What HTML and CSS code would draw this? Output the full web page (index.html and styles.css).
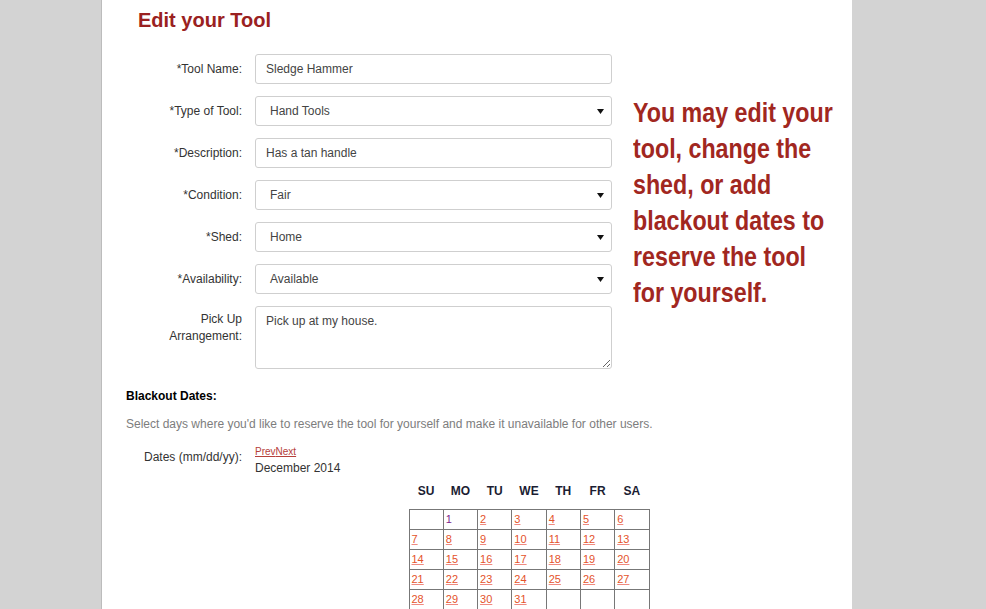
FILE: index.html
```
<!DOCTYPE html>
<html lang="en">
<head>
<meta charset="utf-8">
<title>Edit your Tool</title>
<link rel="stylesheet" href="styles.css">
</head>
<body>
<div class="page">
  <h1 class="title">Edit your Tool</h1>
  <div class="top">
    <form class="form">
      <label class="label">*Tool Name:</label>
      <input class="field" type="text" value="Sledge Hammer">

      <label class="label">*Type of Tool:</label>
      <div class="field select"><span>Hand Tools</span><svg class="caret" width="7" height="5" viewBox="0 0 7 5"><path d="M0 0H7L3.5 5Z" fill="#111"/></svg></div>

      <label class="label">*Description:</label>
      <input class="field" type="text" value="Has a tan handle">

      <label class="label">*Condition:</label>
      <div class="field select"><span>Fair</span><svg class="caret" width="7" height="5" viewBox="0 0 7 5"><path d="M0 0H7L3.5 5Z" fill="#111"/></svg></div>

      <label class="label">*Shed:</label>
      <div class="field select"><span>Home</span><svg class="caret" width="7" height="5" viewBox="0 0 7 5"><path d="M0 0H7L3.5 5Z" fill="#111"/></svg></div>

      <label class="label">*Availability:</label>
      <div class="field select"><span>Available</span><svg class="caret" width="7" height="5" viewBox="0 0 7 5"><path d="M0 0H7L3.5 5Z" fill="#111"/></svg></div>

      <label class="label label-top">Pick Up<br>Arrangement:</label>
      <textarea class="field area">Pick up at my house.</textarea>
    </form>
    <p class="aside">You may edit your<br>tool, change the<br>shed, or add<br>blackout dates to<br>reserve the tool<br>for yourself.</p>
  </div>

  <h2 class="section-title">Blackout Dates:</h2>
  <p class="hint">Select days where you'd like to reserve the tool for yourself and make it unavailable for other users.</p>

  <div class="dates">
    <div class="label dates-label">Dates (mm/dd/yy):</div>
    <div class="dates-body">
      <div class="nav"><a href="#">Prev</a><a href="#">Next</a></div>
      <div class="month">December 2014</div>
      <table class="cal">
        <thead>
          <tr><th>SU</th><th>MO</th><th>TU</th><th>WE</th><th>TH</th><th>FR</th><th>SA</th></tr>
        </thead>
        <tbody>
          <tr><td></td><td><span class="visited">1</span></td><td><a href="#">2</a></td><td><a href="#">3</a></td><td><a href="#">4</a></td><td><a href="#">5</a></td><td><a href="#">6</a></td></tr>
          <tr><td><a href="#">7</a></td><td><a href="#">8</a></td><td><a href="#">9</a></td><td><a href="#">10</a></td><td><a href="#">11</a></td><td><a href="#">12</a></td><td><a href="#">13</a></td></tr>
          <tr><td><a href="#">14</a></td><td><a href="#">15</a></td><td><a href="#">16</a></td><td><a href="#">17</a></td><td><a href="#">18</a></td><td><a href="#">19</a></td><td><a href="#">20</a></td></tr>
          <tr><td><a href="#">21</a></td><td><a href="#">22</a></td><td><a href="#">23</a></td><td><a href="#">24</a></td><td><a href="#">25</a></td><td><a href="#">26</a></td><td><a href="#">27</a></td></tr>
          <tr><td><a href="#">28</a></td><td><a href="#">29</a></td><td><a href="#">30</a></td><td><a href="#">31</a></td><td></td><td></td><td></td></tr>
        </tbody>
      </table>
    </div>
  </div>
</div>
</body>
</html>
```

FILE: styles.css
```
html, body {
  margin: 0;
  padding: 0;
}
body {
  background: #d3d3d3;
  font-family: "Liberation Sans", Arial, sans-serif;
  font-size: 12px;
  color: #333;
  overflow: hidden;
}
.page {
  display: flow-root;
  margin-left: 101px;
  width: 750px;
  min-height: 609px;
  background: #fff;
  border-left: 1px solid #bcbcbc;
}
.title {
  margin: 8px 0 0 36px;
  font-size: 20px;
  line-height: 24px;
  font-weight: bold;
  color: #9a2121;
}
.top {
  display: flex;
  align-items: flex-start;
  margin-top: 22px;
}
.form {
  display: grid;
  grid-template-columns: 140px 357px;
  column-gap: 13px;
  row-gap: 12px;
  margin: 0;
  flex-shrink: 0;
}
.label {
  text-align: right;
  align-self: center;
  font-size: 12px;
  line-height: 17px;
  color: #333;
}
.label-top {
  align-self: start;
  padding-top: 5px;
}
.field {
  box-sizing: border-box;
  width: 357px;
  height: 30px;
  margin: 0;
  border: 1px solid #cfcfcf;
  border-radius: 3px;
  background: #fff;
  font-family: "Liberation Sans", Arial, sans-serif;
  font-size: 12px;
  color: #444;
  padding: 0 10px;
  outline: none;
}
.select {
  display: flex;
  align-items: center;
  justify-content: space-between;
  padding: 0 7px 0 14px;
}
.caret {
  display: block;
  margin-top: 1px;
}
.area {
  height: 63px;
  padding: 7px 10px;
  line-height: 14px;
  resize: vertical;
}
.aside {
  flex-shrink: 0;
  margin: 41px 0 0 21px;
  width: 262px;
  font-family: "Liberation Sans", Arial, sans-serif;
  font-weight: bold;
  font-size: 28px;
  line-height: 36px;
  color: #a1271f;
  white-space: nowrap;
  transform: scaleX(0.83);
  transform-origin: 0 0;
}
.section-title {
  margin: 19px 0 0 24px;
  font-size: 12px;
  line-height: 16px;
  font-weight: bold;
  color: #000;
}
.hint {
  margin: 12px 0 0 24px;
  font-size: 12px;
  line-height: 16px;
  color: #7d7d7d;
}
.dates {
  display: grid;
  grid-template-columns: 140px 548px;
  column-gap: 13px;
  margin-top: 13px;
}
.dates-label {
  align-self: start;
  padding-top: 4px;
  line-height: 16px;
}
.nav {
  font-size: 10px;
  line-height: 14px;
}
.nav a {
  color: #b5403b;
  text-decoration: underline;
}
.month {
  font-size: 12px;
  line-height: 18px;
  color: #333;
}
.cal {
  margin: 4px auto 0;
  width: 241px;
  table-layout: fixed;
  border-collapse: collapse;
}
.cal th {
  font-size: 12px;
  font-weight: bold;
  color: #1b1d33;
  line-height: 20px;
  padding: 0 0 8px;
  text-align: center;
}
.cal td {
  height: 19px;
  padding: 0 2px;
  border: 1px solid #777;
  font-size: 11px;
  line-height: 13px;
  vertical-align: middle;
}
.cal td a {
  color: #e4532b;
  text-decoration: underline;
  text-decoration-color: #f08a80;
}
.visited {
  color: #7d1a8c;
}
```
